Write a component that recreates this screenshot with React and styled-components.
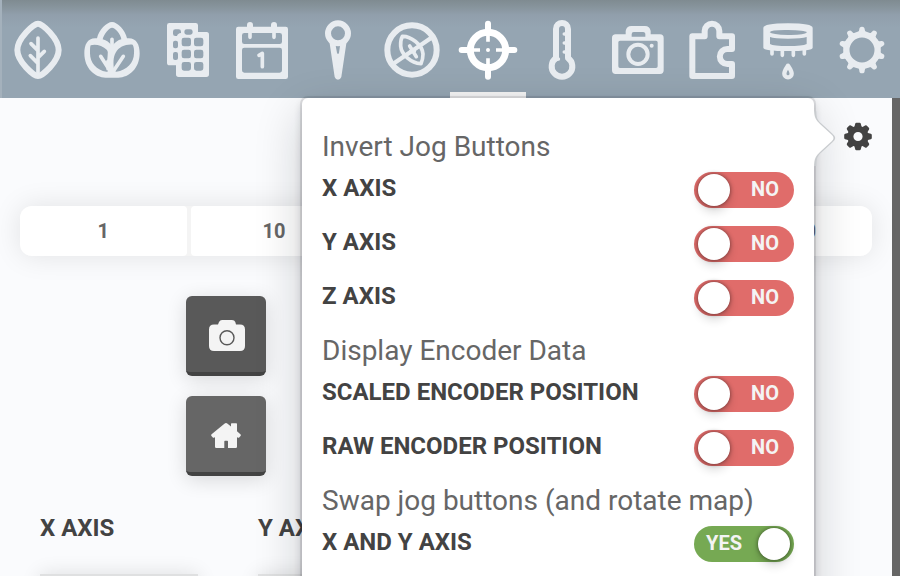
import React from 'react';
import styled, { createGlobalStyle } from 'styled-components';

const GlobalStyle = createGlobalStyle`
  * { box-sizing: border-box; }
  body {
    margin: 0;
    overflow: hidden;
    background: #666;
    font-family: Roboto, "Liberation Sans", sans-serif;
    color: #434343;
  }
`;

const Screen = styled.div`
  width: 900px;
  height: 576px;
  overflow: hidden;
`;

const NavBar = styled.nav`
  display: grid;
  grid-template-columns: repeat(12, 75px);
  height: 98px;
  border-left: 2px solid #a4b1bc;
  background: linear-gradient(#7f8b91 0, #87949c 7px, #919fac 15px, #95a5b2 28px, #95a5b2 100%);
`;

const NavTab = styled.div`
  display: flex;
  height: 98px;
  margin-left: -2px;
  width: ${(p) => (p.$active ? 76 : 75)}px;
  border-bottom: 6px solid ${(p) => (p.$active ? '#f4f4f4' : 'transparent')};
  color: ${(p) => (p.$active ? '#fff' : '#e8ecf0')};
`;

const NavGlyph = styled.svg`
  flex: none;
  width: 75px;
  height: 98px;
  fill: none;
  stroke: currentColor;
  stroke-width: 18;
  stroke-linecap: round;
  stroke-linejoin: round;

  .solid { fill: currentColor; stroke: none; }
  .thin { stroke-width: 11; }
`;

const Panel = styled.main`
  position: relative;
  width: 892px;
  height: 478px;
  background: #fafbfd;
`;

const PanelTop = styled.div`
  display: flex;
  justify-content: flex-end;
  height: 108px;
  padding: 24px 19px 0 0;
`;

const SettingsButton = styled.button`
  display: flex;
  width: 30px;
  height: 30px;
  padding: 0;
  border: 0;
  background: none;
  color: #434343;
`;

const StepPicker = styled.div`
  display: grid;
  grid-template-columns: repeat(4, 166.6px) 1fr;
  gap: 4px;
  height: 50px;
  overflow: hidden;
  border-radius: 12px;
  background: #f4f4f4;
`;

const StepShadow = styled.div`
  margin: 0 20px;
  border-radius: 12px;
  box-shadow: 0 0 28px rgba(0, 0, 0, 0.1);
`;

const Step = styled.button`
  padding: 0 0 1px;
  border: 0;
  border-radius: 4px;
  background: #fff;
  color: #666;
  font: 700 20px Roboto, sans-serif;
`;

const Controls = styled.div`
  display: flex;
  flex-direction: column;
  gap: 20px;
  padding: 40px 0 0 186px;
`;

const ControlButton = styled.button`
  display: flex;
  align-items: center;
  justify-content: center;
  width: 80px;
  height: 80px;
  padding: ${(p) => (p.$pressed ? '3px 0 0 2px' : '3px 0 0')};
  border: 0;
  border-bottom: 4px solid #434343;
  border-radius: 6px;
  background: ${(p) => (p.$pressed ? '#595959' : '#666')};
  color: #f4f4f4;
  box-shadow: 0 4px 20px rgba(0, 0, 0, 0.14);
`;

const Axes = styled.div`
  display: grid;
  grid-template-columns: repeat(3, 158px);
  column-gap: 60px;
  padding: 36px 0 0 40px;
`;

const AxisLabel = styled.label`
  display: block;
  height: 62px;
  font-size: 24px;
  font-weight: 700;
  line-height: 32px;
`;

const AxisField = styled.div`
  height: 60px;
  background: #dfe0e1;
  box-shadow: 0 0 20px rgba(0, 0, 0, 0.12);
`;

const Popover = styled.section`
  position: absolute;
  top: 0;
  left: 302px;
  width: 512px;
  height: 640px;
  padding: 34px 20px 0;
  border-radius: 6px;
  background: #fff;
  box-shadow:
    0 0 0 2px rgba(16, 22, 26, 0.1),
    0 4px 8px rgba(16, 22, 26, 0.2),
    0 16px 48px rgba(16, 22, 26, 0.2);
`;

const PopoverArrow = styled.svg`
  position: absolute;
  top: 10px;
  left: 508px;
  overflow: visible;
`;

const Group = styled.div`
  margin-bottom: 20px;
`;

const GroupTitle = styled.h3`
  height: 40px;
  margin: 0;
  color: #666;
  font-size: 28px;
  font-weight: 400;
  line-height: 29px;
  white-space: nowrap;
`;

const Rows = styled.div`
  display: grid;
  row-gap: 18px;
`;

const Row = styled.div`
  display: flex;
  justify-content: space-between;
  height: 36px;
`;

const RowLabel = styled.span`
  font-size: 24px;
  font-weight: 700;
  line-height: 32px;
  white-space: nowrap;
`;

const Toggle = styled.button`
  display: flex;
  flex-direction: ${(p) => (p.$on ? 'row-reverse' : 'row')};
  align-items: flex-start;
  justify-content: space-between;
  width: 100px;
  height: 36px;
  padding: ${(p) => (p.$on ? '2px 4px 0 12px' : '2px 15px 0 4px')};
  border: 0;
  border-radius: 18px;
  background: ${(p) => (p.$on ? '#76a953' : '#e06c6a')};
  color: #f4f4f4;
  font: 700 20px/30px Roboto, sans-serif;
`;

const Knob = styled.span`
  width: 32px;
  height: 32px;
  border-radius: 50%;
  background: #fff;
  box-shadow: 0 0 4px rgba(0, 0, 0, 0.5), 0 6px 10px rgba(0, 0, 0, 0.14);
`;

const box = (x, y, w, h, r) =>
  `M${x + r} ${y}h${w - 2 * r}a${r} ${r} 0 0 1 ${r} ${r}v${h - 2 * r}a${r} ${r} 0 0 1 ${-r} ${r}h${2 * r - w}a${r} ${r} 0 0 1 ${-r} ${-r}v${2 * r - h}a${r} ${r} 0 0 1 ${r} ${-r}z`;

const traySlots = [
  ...[113, 149, 186].flatMap((y) => [95, 132].map((x) => box(x, y, 28, 26, 7))),
  box(103, 88, 25, 16, 7),
  box(69, 122, 15, 23, 6),
  box(69, 156, 15, 24, 6),
  'M76 88h10q7 0 7 7v4q-10 1 -12 9h-5q-7 0 -7 -7v-6q0 -7 7 -7z',
].join('');

const spokes = Array.from({ length: 10 }, (_, i) => i * 36);

const navIcons = {
  plant: (
    <>
      <path d="M114 71C127 71 176 115 176 150S127 228 114 228S52 185 52 150S101 71 114 71Z" />
      <path className="thin" d="M114 114V220M93 131L114 152M133 154L114 173M91 167L114 190" />
    </>
  ),
  crops: (
    <>
      <path
        className="solid"
        fillRule="evenodd"
        d="M111 66C127 66 151 90 156 115C184 112 194 133 194 160C194 205 162 233 130 233H92C60 233 28 205 28 160C28 133 38 112 66 115C71 90 95 66 111 66Z
          M111 83C120 83 137 101 139 118C129 120 120 127 113 136Q111 138 109 136C103 128 95 121 83 118C87 101 103 83 111 83Z
          M47 136C60 131 82 136 96 150Q100 155 98 165C96 180 97 198 99 212Q99 216 94 215C65 212 45 188 45 160C45 148 45 140 47 136Z
          M173 134C176 138 178 150 177 160C177 188 155 212 124 215Q117 215 117 208C115 190 114 172 122 158C132 140 152 132 173 134Z"
      />
      <path className="thin" d="M111 118V142M77 169L102 208M99 184V206M145 169L116 212" />
    </>
  ),
  tray: (
    <path
      className="solid"
      fillRule="evenodd"
      d={`M58 69H137Q144 69 144 76V96H170Q177 96 177 104V223Q177 231 169 231H86Q78 231 78 223V196H59Q51 196 51 188V76Q51 69 58 69Z${traySlots}`}
    />
  ),
  calendar: (
    <>
      <path className="solid" fillRule="evenodd" d={box(33, 80, 156, 157, 7) + box(51, 99, 120, 33, 7) + box(51, 143, 120, 75, 7)} />
      <path d="M75 75V84M147 75V84" />
      <path className="thin" d="M75 90V112M147 90V112" />
      <path className="thin" d="M102 166L112 160V200" />
    </>
  ),
  pin: (
    <>
      <circle cx="114" cy="100" r="30" />
      <path className="solid" fillRule="evenodd" d="M88 124H140L124 231Q121 239 114 239T104 231ZM106 131L111 158Q114 166 117 158L121 131Z" />
    </>
  ),
  weeds: (
    <>
      <circle cx="111" cy="150" r="74" />
      <path d="M57 190L167 115" strokeWidth="13" />
      <path className="thin" d="M82 109C107 108 142 134 144 162Q144 178 138 191C108 189 79 164 77 138Q76 120 82 109ZM104 138L124 170M107 154H118" />
    </>
  ),
  controls: (
    <>
      <circle cx="114" cy="150" r="53" strokeWidth="21" />
      <path d="M114 71V90M114 210V230M35 150H54M174 150H193" />
      <path className="thin" strokeLinecap="butt" d="M114 98V125M114 175V202M66 150H90M138 150H162" />
      <circle className="solid" cx="114" cy="150" r="6" />
    </>
  ),
  sensors: (
    <>
      <path d="M93 174V87C93 63 129 63 129 87V174A31 31 0 1 1 93 174Z" />
      <path className="thin" d="M118 102H124M118 129H124M118 156H124" />
      <path className="thin" d="M94 178L100 177" />
    </>
  ),
  photos: (
    <>
      <path className="solid" fillRule="evenodd" d={`M47 103H77V93Q80 78 94 78H135Q149 78 152 93V103H180Q191 103 191 114V211Q191 222 180 222H47Q36 222 36 211V114Q36 103 47 103ZM95 110H136V101Q135 96 130 96H101Q95 96 95 103Z${box(55, 122, 118, 82, 5)}`} />
      <circle cx="114" cy="163" r="29" strokeWidth="12" />
      <circle className="solid" cx="155" cy="137" r="6" />
    </>
  ),
  farmware: (
    <path d="M52 109H89V93A22 22 0 0 1 133 93V109H171V147H157A22.5 22.5 0 0 0 157 192H171V228H52Z" />
  ),
  tools: (
    <>
      <path className="solid" fillRule="evenodd" d="M40 84Q40 70 114 70T188 84V143Q188 153 114 153T40 143ZM59 97Q65 104 114 105T171 97Q165 91 114 90T59 97ZM60 111V132Q70 138 114 138T170 132V111Q155 116 114 116T60 111Z" />
      <path className="thin" d="M66 149V162M97 153V166M130 153V166M163 149V162" />
      <path d="M114 197C110 203 103 212 103 221A11 11 0 0 0 125 221C125 212 118 203 114 197Z" strokeWidth="13" />
    </>
  ),
  settings: (
    <>
      <circle cx="111" cy="150" r="47" strokeWidth="19" />
      {spokes.map((a) => (
        <path key={a} className="solid" d="M97 98Q103 95 103 88A8 8 0 0 1 119 88Q119 95 125 98Z" transform={`rotate(${a} 111 150)`} />
      ))}
    </>
  ),
};

function CogIcon() {
  return (
    <svg width="30" height="30" viewBox="-15 -14.5 30 30" fill="none">
      <circle r="7.6" stroke="currentColor" strokeWidth="6" />
      {[0, 45, 90, 135, 180, 225, 270, 315].map((a) => (
        <path key={a} d="M-3.8 -9L-2.8 -12.8Q-2.5 -13.8 -1.6 -13.8H1.6Q2.5 -13.8 2.8 -12.8L3.8 -9Z" fill="currentColor" transform={`rotate(${a})`} />
      ))}
    </svg>
  );
}

function CameraIcon() {
  return (
    <svg width="36" height="31" viewBox="0 0 36 31">
      <path fill="currentColor" d="M5 4.5H9L10 2Q11 0 13 0H23Q25.5 0 26.3 2L27 4.5H31Q36 4.5 36 9.5V26Q36 31 31 31H5Q0 31 0 26V9.5Q0 4.5 5 4.5Z" />
      <circle cx="18" cy="17.8" r="7" fill="none" stroke="#595959" strokeWidth="1.4" />
    </svg>
  );
}

function HomeIcon() {
  return (
    <svg width="30" height="25" viewBox="0 0 30 25" fill="currentColor">
      <path d="M13.4.7Q15 -.5 16.6.7L20 3.5V1Q20 .3 20.7.3H25.3Q26 .3 26 1V8.3L29.4 11.2Q30.3 12 29.5 13L28.2 14.5Q27.5 15.2 26.5 14.5L26 14V23.7Q26 25 24.7 25H17V18.5Q17 17.7 16.3 17.7H14Q13.3 17.7 13.3 18.5V25H5.3Q4 25 4 23.7V14L3.5 14.5Q2.5 15.2 1.8 14.5L.5 13Q-.3 12 .6 11.2Z" />
    </svg>
  );
}

const groups = [
  { title: 'Invert Jog Buttons', rows: [['X AXIS', false], ['Y AXIS', false], ['Z AXIS', false]] },
  { title: 'Display Encoder Data', rows: [['SCALED ENCODER POSITION', false], ['RAW ENCODER POSITION', false]] },
  { title: 'Swap jog buttons (and rotate map)', rows: [['X AND Y AXIS', true]] },
];

export default function App() {
  return (
    <Screen>
      <GlobalStyle />
      <NavBar>
        {Object.entries(navIcons).map(([name, drawing]) => (
          <NavTab key={name} $active={name === 'controls'}>
            <NavGlyph viewBox="0 0 225 294">{drawing}</NavGlyph>
          </NavTab>
        ))}
      </NavBar>
      <Panel>
        <PanelTop>
          <SettingsButton aria-label="Settings"><CogIcon /></SettingsButton>
        </PanelTop>
        <StepShadow>
          <StepPicker>
            {[1, 10, 100, 1000, 10000].map((n) => <Step key={n}>{n}</Step>)}
          </StepPicker>
        </StepShadow>
        <Controls>
          <ControlButton $pressed aria-label="Take photo"><CameraIcon /></ControlButton>
          <ControlButton aria-label="Home"><HomeIcon /></ControlButton>
        </Controls>
        <Axes>
          {['X AXIS', 'Y AXIS'].map((axis) => (
            <div key={axis}>
              <AxisLabel>{axis}</AxisLabel>
              <AxisField />
            </div>
          ))}
        </Axes>
        <Popover>
          <PopoverArrow width="26" height="60" viewBox="0 0 26 60">
            <path d="M5 3C5 10 6 12 10 16L22 27Q26 30 22 33L10 44C6 48 5 50 5 58" fill="#fff" stroke="#c9cccf" strokeWidth="2.4" />
            <path d="M0 0H4C4 10 6 12 10 16L22 27Q25 30 22 33L10 44C6 48 4 50 4 60H0Z" fill="#fff" />
          </PopoverArrow>
          {groups.map((group) => (
            <Group key={group.title}>
              <GroupTitle>{group.title}</GroupTitle>
              <Rows>
                {group.rows.map(([label, on]) => (
                  <Row key={label}>
                    <RowLabel>{label}</RowLabel>
                    <Toggle $on={on}>
                      <Knob />
                      {on ? 'YES' : 'NO'}
                    </Toggle>
                  </Row>
                ))}
              </Rows>
            </Group>
          ))}
        </Popover>
      </Panel>
    </Screen>
  );
}
